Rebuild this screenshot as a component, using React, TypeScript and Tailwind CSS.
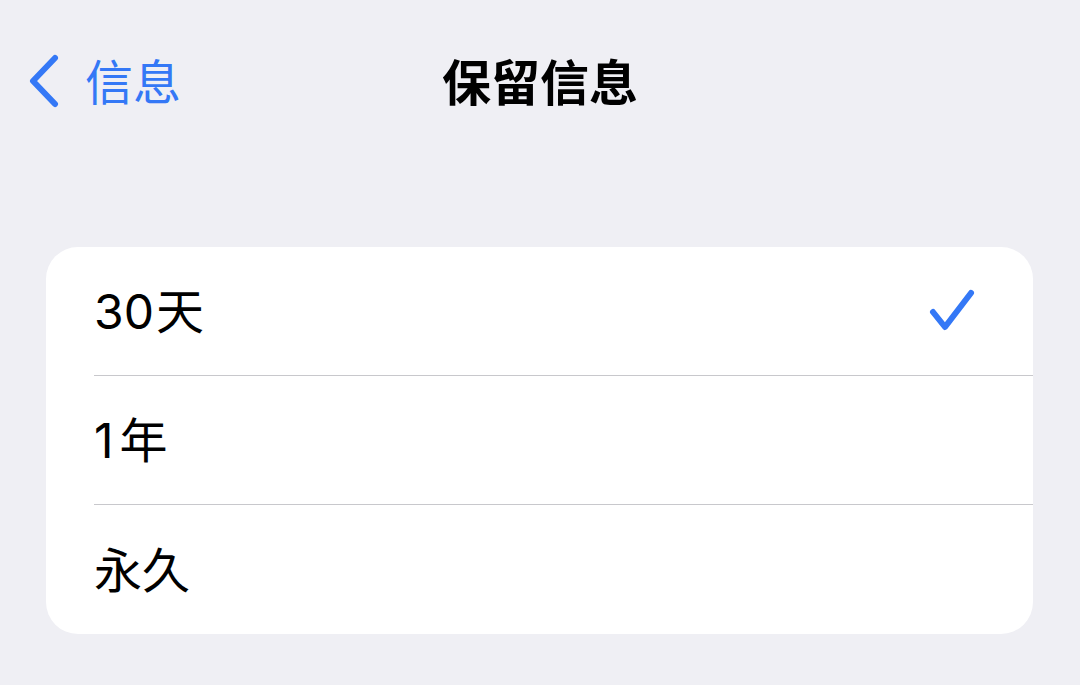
import React from "react";

const font = { fontFamily: '"Noto Sans CJK SC", "Noto Sans", sans-serif' };
const rowFont = { fontFamily: 'Inter, "Noto Sans CJK SC", sans-serif' };

export default function App() {
  const rows: [string, string, string][] = [["30", "天", "ml-[2px]"], ["1", "年", "ml-[6px]"], ["", "永久", ""]];
  return (
    <div className="w-[1080px] h-[685px] bg-[#efeff4] overflow-hidden" style={font}>
      <div className="relative h-[164px] flex items-center justify-center pb-[6px]">
        <div className="absolute left-[27px] top-0 h-[164px] flex items-center gap-[26px] pb-[2px]">
          <svg width="32" height="54" viewBox="0 0 32 54">
            <path d="M28 4 L6 27 L28 50" fill="none" stroke="#3478f6" strokeWidth="6" strokeLinecap="round" strokeLinejoin="round" />
          </svg>
          <span className="text-[48px] leading-none text-[#3478f6] -mt-[4px]">信息</span>
        </div>
        <span className="text-[49px] leading-none font-bold text-black">保留信息</span>
      </div>
      <div className="ml-[46px] mr-[47px] mt-[83px] bg-white rounded-[32px] overflow-hidden">
        {rows.map(([num, cjk, gap], i) => (
          <div key={cjk} className="pl-[94px] -ml-[46px]">
            <div className={`h-[129px] flex items-center justify-between pr-[58px] ${i < rows.length - 1 ? "border-b border-[#c8c8cc]" : ""}`}>
              <span className="text-[48px] leading-none text-black pt-[2px]" style={rowFont}>
                {num}
                <span className={gap}>{cjk}</span>
              </span>
              {i === 0 && (
                <svg width="46" height="46" viewBox="0 0 46 46">
                  <path d="M4 24 L16 39 L42 5" fill="none" stroke="#3478f6" strokeWidth="6" strokeLinecap="round" strokeLinejoin="round" />
                </svg>
              )}
            </div>
          </div>
        ))}
      </div>
    </div>
  );
}
